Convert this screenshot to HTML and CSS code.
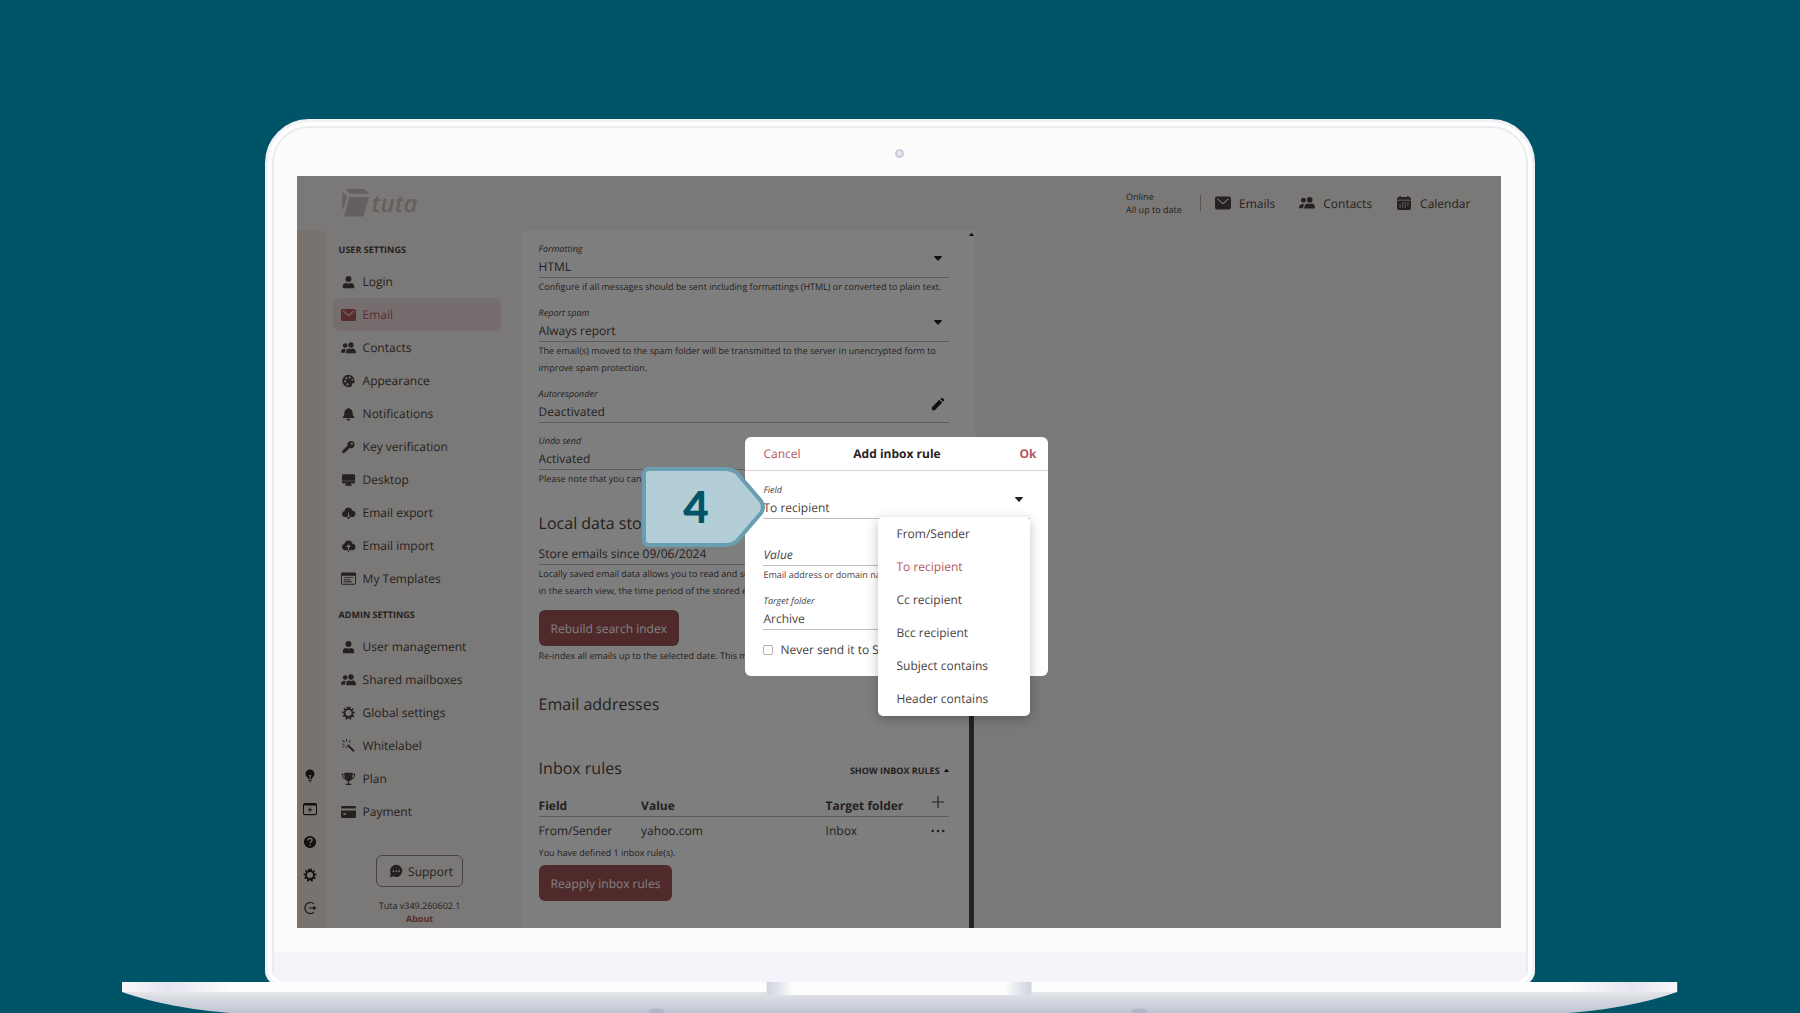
FILE: index.html
```html
<!DOCTYPE html>
<html lang="en">
<head>
    <meta charset="UTF-8">
    <title>Tuta - Add inbox rule</title>
    <link rel="stylesheet" href="styles.css">
</head>
<body>
<!-- icon sprite -->
<svg class="sprite" aria-hidden="true">
    <symbol id="i-user" viewBox="0 0 16 16"><circle cx="8" cy="4.6" r="3.4"/><path d="M1.5 14.4v-1.6c0-2.2 1.9-3.6 4-3.6 1.6.8 3.4.8 5 0 2.100 0 4 1.400 4 3.600v1.600q0 .6-.6.6H2.100q-.6 0-.6-.6z"/></symbol>
    <symbol id="i-users" viewBox="0 0 18 14"><circle cx="5" cy="4" r="2.800"/><circle cx="12" cy="3.400" r="3.200"/><path d="M0 12.300c0-2.800 1.400-4.300 4-4.300.8.5 1.800.5 2.600.1C5.200 9.300 4.700 10.700 4.700 12.800H.5q-.5 0-.5-.5zM6 12.700c0-3 1.300-4.900 4-5 1.300.6 2.700.6 4 0 2.700.1 4 2 4 5q0 .6-.6.6H6.600q-.6 0-.6-.6z"/></symbol>
    <symbol id="i-mail" viewBox="0 0 16 13"><path fill-rule="evenodd" d="M2 0h12a2 2 0 0 1 2 2v9a2 2 0 0 1-2 2H2a2 2 0 0 1-2-2V2a2 2 0 0 1 2-2zM2 2.600l5.200 4.700q.8.7 1.600 0L14 2.600l-.7-.8L8 6.500 2.700 1.800z"/></symbol>
    <symbol id="i-palette" viewBox="0 0 16 16"><path fill-rule="evenodd" d="M8 1a7 7 0 1 0 3.500 13c1.200-.8-.3-2.200.4-3 .9-1 3.100.6 3.100-2.500C15 4 12 1 8 1zM4.100 7.200a1.200 1.200 0 1 0 0 2.400 1.200 1.200 0 0 0 0-2.400zM5.700 3.500a1.200 1.200 0 1 0 0 2.400 1.200 1.200 0 0 0 0-2.400zM9.500 2.900a1.200 1.200 0 1 0 0 2.400 1.200 1.200 0 0 0 0-2.400zM12.400 5.600a1.100 1.100 0 1 0 0 2.200 1.100 1.100 0 0 0 0-2.200zM6.800 10.700a1.300 1.300 0 1 0 0 2.600 1.300 1.300 0 0 0 0-2.600z"/></symbol>
    <symbol id="i-bell" viewBox="0 0 16 16"><path d="M8 .8q1 0 1 1.200c2.500.5 3.700 2.300 3.700 4.900 0 2.400.7 3.500 2 4.700v1H1.300v-1c1.300-1.200 2-2.300 2-4.700C3.300 4.300 4.500 2.500 7 2q0-1.200 1-1.200zM5.900 13.400h4.200a2.100 2.100 0 0 1-4.200 0z"/></symbol>
    <symbol id="i-key" viewBox="0 0 16 16"><path fill-rule="evenodd" d="M10.800 1a4.200 4.200 0 0 0-4 5.500L1 12.300q-.5 2.200.7 2.700 1.200.3 2.300-.6l5.500-5.200A4.200 4.200 0 1 0 10.800 1zm1.100 2.100a1.200 1.200 0 1 1 0 2.400 1.200 1.200 0 0 1 0-2.400z"/></symbol>
    <symbol id="i-desktop" viewBox="0 0 16 16"><path d="M2 1.500h12a1.500 1.500 0 0 1 1.500 1.500v5.800H.5V3A1.500 1.500 0 0 1 2 1.500zM.5 9.400h15v1.100A1.500 1.500 0 0 1 14 12h-3.500l.5 1.400h1v1.100H4v-1.100h1L5.500 12H2a1.500 1.500 0 0 1-1.500-1.500z"/></symbol>
    <symbol id="i-export" viewBox="0 0 16 16"><path fill-rule="evenodd" d="M4 12.500a3.500 3.500 0 0 1-.7-6.900 4.700 4.700 0 0 1 9.200-.3 3.600 3.600 0 0 1-.5 7.200h-1.700L8 15l-2.300-2.500zM7.500 7.500V11H6l2 2.200L10 11H8.500V7.500z"/></symbol>
    <symbol id="i-import" viewBox="0 0 16 16"><path fill-rule="evenodd" d="M4 12.800a3.600 3.600 0 0 1-.7-7.100 4.700 4.700 0 0 1 9.200-.3 3.700 3.700 0 0 1-.5 7.400H8.600v-3.700H10.800L8 6 5.200 9.100H7.400V15h1.200v-2.200z"/></symbol>
    <symbol id="i-template" viewBox="0 0 16 14"><path fill-rule="evenodd" d="M1.500 0h13A1.500 1.500 0 0 1 16 1.500v10a1.500 1.500 0 0 1-1.500 1.500h-13A1.500 1.500 0 0 1 0 11.500v-10A1.500 1.500 0 0 1 1.500 0zM1 3.500v8q0 .5.5.5h13q.5 0 .5-.5v-8zM3 5h10v1H3zm0 2.200h7v1H3zm0 2.200h9v1H3z"/></symbol>
    <symbol id="i-gear" viewBox="0 0 16 16"><path fill-rule="evenodd" d="M6.200 2.700 5.300 1 7.100.6 8 2l.9-1.400 1.800.4-.9 1.700 1.500.9 1.400-1.300 1.100 1.400-1.300 1.300.7 1.500 1.900-.1.300 1.800-1.900.4-.3 1.600 1.500 1.200-.9 1.500-1.800-.7-1.200 1.100.6 1.800-1.700.6L8.800 14H7.200l-1.100 1.600-1.700-.7.7-1.700-1.200-1.100-1.800.6-.8-1.600 1.500-1.100-.3-1.600L.6 8l.3-1.800 1.900.1.700-1.500-1.300-1.300L3.300 2l1.500 1.500zM8 4.500a3.500 3.500 0 1 0 0 7 3.500 3.500 0 0 0 0-7z"/></symbol>
    <symbol id="i-wand" viewBox="0 0 16 16"><path d="m6.200 7.600 1.600-1.500 7.300 7.100-1.600 1.700zM5.200 0h1.100v3H5.200zM1 2l.8-.8 2.100 2-.8.8zM.3 5.400h3v1h-3zM1 9.300l2.100-2 .8.8-2.100 2zM8 3.300 10 1.200l.8.8-2 2.100zM5.200 8.500h1.100v2H5.200z"/></symbol>
    <symbol id="i-trophy" viewBox="0 0 16 16"><path fill-rule="evenodd" d="M3.400.8h9.200v1.300h3c.1 3.800-1.200 5.800-3.700 6.300-.7 1.300-1.700 2-3.200 2.300v2.600h2.500v1.500H4.800v-1.500h2.500v-2.600c-1.500-.3-2.500-1-3.200-2.300C1.600 7.900.3 5.900.4 2.100h3zM1.500 3.100c.1 2 .8 3.300 2.100 3.900-.2-1-.2-2.400-.2-3.900zm11.100 0c0 1.500 0 2.900-.2 3.900 1.300-.6 2-1.900 2.100-3.900z"/></symbol>
    <symbol id="i-card" viewBox="0 0 16 13"><path fill-rule="evenodd" d="M1.500 0h13A1.500 1.500 0 0 1 16 1.500v1.300H0V1.500A1.500 1.500 0 0 1 1.500 0zM0 5h16v6.500a1.500 1.500 0 0 1-1.500 1.500h-13A1.500 1.500 0 0 1 0 11.500zm2.500 2.800v1.700h3V7.800z"/></symbol>
    <symbol id="i-bulb" viewBox="0 0 16 16"><path fill-rule="evenodd" d="M8 .5a5 5 0 0 1 3.200 8.900c-.7.7-.9 1.200-1 2.100H8.600V8.200l1.200-1-.6-.7L8 7.500l-1.200-1-.6.7 1.200 1v3.300H5.800c-.1-.9-.3-1.400-1-2.100A5 5 0 0 1 8 .5zM6 12.300h4v1.200H6zm.8 1.900h2.400L8 15.700z"/></symbol>
    <symbol id="i-newwin" viewBox="0 0 16 14"><path fill-rule="evenodd" d="M2 0h12a2 2 0 0 1 2 2v10a2 2 0 0 1-2 2H2a2 2 0 0 1-2-2V2a2 2 0 0 1 2-2zM1.200 3v9q0 .8.8.8h12q.8 0 .8-.8V3zm6.200 2.300h1.200v1.900h1.900v1.200H8.600v1.900H7.400V8.400H5.500V7.200h1.900z"/></symbol>
    <symbol id="i-help" viewBox="0 0 16 16"><circle cx="8" cy="8" r="7"/><path class="cut" d="M5.600 6.300C5.700 4.700 6.600 4 8 4s2.400.8 2.400 2c0 1.700-2.200 1.700-2.200 3.500M8.200 11v1.500"/></symbol>
    <symbol id="i-logout" viewBox="0 0 16 16"><path class="line" d="M12.600 3.300a6.300 6.300 0 1 0 0 9.400M6.500 8h7"/><path d="M12 5.300 15.300 8 12 10.700z"/></symbol>
    <symbol id="i-chat" viewBox="0 0 16 16"><path fill-rule="evenodd" d="M8.300 1a6.900 6.900 0 1 1-3.200 13L1 15l.9-4.200A6.900 6.900 0 0 1 8.300 1zM5 7a1 1 0 1 0 0 2 1 1 0 0 0 0-2zm3.300 0a1 1 0 1 0 0 2 1 1 0 0 0 0-2zm3.300 0a1 1 0 1 0 0 2 1 1 0 0 0 0-2z"/></symbol>
    <symbol id="i-calendar" viewBox="0 0 15 14"><path fill-rule="evenodd" d="M3 0h1.300v1h6.400V0H12v1h.5a2 2 0 0 1 2 2v.8H.5V3a2 2 0 0 1 2-2H3zM.5 4.600h14V12a2 2 0 0 1-2 2h-10a2 2 0 0 1-2-2zM5.600 6.600v.9h1.300v-.9zm2.600 0v.9h1.300v-.9zm2.600 0v.9h1.300v-.9zM3 8.600v.9h1.300v-.9zm2.600 0v.9h1.300v-.9zm2.600 0v.9h1.300v-.9zm2.600 0v.9h1.300v-.9zM3 10.600v.9h1.300v-.9zm2.600 0v.9h1.300v-.9zm2.600 0v.9h1.300v-.9z"/></symbol>
    <symbol id="i-pencil" viewBox="0 0 16 16"><path d="M1 11.700 9.500 3.200l3.300 3.300L4.300 15H1zM10.500 2.200l.9-.9q1-1 2 0l1.300 1.300q1 1 0 2l-.9.900z"/></symbol>
    <symbol id="i-plus" viewBox="0 0 16 16"><path class="line" d="M8 1v14M1 8h14"/></symbol>
    <symbol id="i-dots" viewBox="0 0 16 16"><circle cx="2" cy="8" r="1.500"/><circle cx="8" cy="8" r="1.500"/><circle cx="14" cy="8" r="1.500"/></symbol>
    <symbol id="i-down" viewBox="0 0 10 6"><path d="M.4 0h9.200q.6.300.2.800L5.700 5.600q-.7.6-1.400 0L.2.800Q-.2.300.4 0z"/></symbol>
    <symbol id="i-up" viewBox="0 0 10 6"><path d="M.4 6h9.200q.6-.3.200-.8L5.700.4Q5-.2 4.300.4L.2 5.200q-.4.5.2.8z"/></symbol>
</svg>

<div class="laptop">
    <div class="lid">
        <div class="camera"></div>
        <div class="screen">
            <header class="topbar">
                <div class="logo">
                    <svg viewBox="0 0 28 28" aria-hidden="true"><path d="M3.700 0h18.600L27 4.700H7.500zM.3 3l5 4.500-5 14.500zM7.400 8H27l-5.300 19.500H2z"/></svg>
                    <span>tuta</span>
                </div>
                <div class="status">Online<br>All up to date</div>
                <nav class="mainnav">
                    <a href="#"><svg class="icon"><use href="#i-mail"/></svg>Emails</a>
                    <a href="#"><svg class="icon"><use href="#i-users"/></svg>Contacts</a>
                    <a href="#"><svg class="icon"><use href="#i-calendar"/></svg>Calendar</a>
                </nav>
            </header>

            <div class="columns">
                <div class="rail">
                    <button aria-label="News"><svg class="icon"><use href="#i-bulb"/></svg></button>
                    <button aria-label="New window"><svg class="icon"><use href="#i-newwin"/></svg></button>
                    <button aria-label="Help"><svg class="icon"><use href="#i-help"/></svg></button>
                    <button aria-label="Settings"><svg class="icon"><use href="#i-gear"/></svg></button>
                    <button aria-label="Logout"><svg class="icon"><use href="#i-logout"/></svg></button>
                </div>

                <div class="sidebar">
                    <nav>
                        <h2>USER SETTINGS</h2>
                        <a href="#"><svg class="icon"><use href="#i-user"/></svg>Login</a>
                        <a href="#" class="active"><svg class="icon"><use href="#i-mail"/></svg>Email</a>
                        <a href="#"><svg class="icon"><use href="#i-users"/></svg>Contacts</a>
                        <a href="#"><svg class="icon"><use href="#i-palette"/></svg>Appearance</a>
                        <a href="#"><svg class="icon"><use href="#i-bell"/></svg>Notifications</a>
                        <a href="#"><svg class="icon"><use href="#i-key"/></svg>Key verification</a>
                        <a href="#"><svg class="icon"><use href="#i-desktop"/></svg>Desktop</a>
                        <a href="#"><svg class="icon"><use href="#i-export"/></svg>Email export</a>
                        <a href="#"><svg class="icon"><use href="#i-import"/></svg>Email import</a>
                        <a href="#"><svg class="icon"><use href="#i-template"/></svg>My Templates</a>
                        <h2>ADMIN SETTINGS</h2>
                        <a href="#"><svg class="icon"><use href="#i-user"/></svg>User management</a>
                        <a href="#"><svg class="icon"><use href="#i-users"/></svg>Shared mailboxes</a>
                        <a href="#"><svg class="icon"><use href="#i-gear"/></svg>Global settings</a>
                        <a href="#"><svg class="icon"><use href="#i-wand"/></svg>Whitelabel</a>
                        <a href="#"><svg class="icon"><use href="#i-trophy"/></svg>Plan</a>
                        <a href="#"><svg class="icon"><use href="#i-card"/></svg>Payment</a>
                    </nav>
                    <div class="sidebar-footer">
                        <button class="support"><svg class="icon"><use href="#i-chat"/></svg>Support</button>
                        <div>Tuta v349.260602.1</div>
                        <a href="#">About</a>
                    </div>
                </div>

                <main class="panel">
                    <div class="field">
                        <label for="formatting">Formatting</label>
                        <div class="control">
                            <select id="formatting"><option>HTML</option></select>
                            <svg class="caret"><use href="#i-down"/></svg>
                        </div>
                        <p class="help">Configure if all messages should be sent including formattings (HTML) or converted to plain text.</p>
                    </div>
                    <div class="field">
                        <label for="spam">Report spam</label>
                        <div class="control">
                            <select id="spam"><option>Always report</option></select>
                            <svg class="caret"><use href="#i-down"/></svg>
                        </div>
                        <p class="help">The email(s) moved to the spam folder will be transmitted to the server in unencrypted form to<br>improve spam protection.</p>
                    </div>
                    <div class="field">
                        <label for="autoresponder">Autoresponder</label>
                        <div class="control">
                            <input type="text" id="autoresponder" value="Deactivated" readonly>
                            <button class="edit" aria-label="Edit"><svg class="icon"><use href="#i-pencil"/></svg></button>
                        </div>
                    </div>
                    <div class="field">
                        <label for="undo">Undo send</label>
                        <div class="control">
                            <select id="undo"><option>Activated</option></select>
                            <svg class="caret"><use href="#i-down"/></svg>
                        </div>
                        <p class="help">Please note that you can undo sending an email within 15 seconds.</p>
                    </div>

                    <h3 class="first">Local data storage</h3>
                    <div class="control">
                        <input type="text" value="Store emails since 09/06/2024" aria-label="Store emails since" readonly>
                    </div>
                    <p class="help">Locally saved email data allows you to read and search your emails offline. When searching<br>in the search view, the time period of the stored emails is extended automatically.</p>
                    <button class="primary">Rebuild search index</button>
                    <p class="help">Re-index all emails up to the selected date. This may take some time.</p>

                    <h3>Email addresses</h3>

                    <div class="section-head">
                        <h3>Inbox rules</h3>
                        <button>SHOW INBOX RULES <svg class="tiny"><use href="#i-up"/></svg></button>
                    </div>
                    <table>
                        <thead>
                            <tr>
                                <th>Field</th>
                                <th>Value</th>
                                <th>Target folder</th>
                                <th><button aria-label="Add inbox rule"><svg class="icon"><use href="#i-plus"/></svg></button></th>
                            </tr>
                        </thead>
                        <tbody>
                            <tr>
                                <td>From/Sender</td>
                                <td>yahoo.com</td>
                                <td>Inbox</td>
                                <td><button aria-label="More"><svg class="icon"><use href="#i-dots"/></svg></button></td>
                            </tr>
                        </tbody>
                    </table>
                    <p class="help">You have defined 1 inbox rule(s).</p>
                    <button class="primary reapply">Reapply inbox rules</button>

                    <div class="scrollbar"><svg class="tiny"><use href="#i-up"/></svg><span></span></div>
                </main>
            </div>

            <div class="overlay">
                <div class="dialog" role="dialog" aria-labelledby="dialog-title">
                    <div class="dialog-head">
                        <button class="cancel">Cancel</button>
                        <h2 id="dialog-title">Add inbox rule</h2>
                        <button class="ok">Ok</button>
                    </div>
                    <div class="dialog-body">
                        <div class="field">
                            <label for="rule-field">Field</label>
                            <div class="control">
                                <select id="rule-field"><option>To recipient</option></select>
                                <svg class="caret"><use href="#i-down"/></svg>
                            </div>
                        </div>
                        <div class="field value-field">
                            <div class="control">
                                <input type="text" placeholder="Value" aria-label="Value">
                            </div>
                            <p class="help">Email address or domain name</p>
                        </div>
                        <div class="field">
                            <label for="folder">Target folder</label>
                            <div class="control">
                                <select id="folder"><option>Archive</option></select>
                            </div>
                        </div>
                        <label class="check"><input type="checkbox">Never send it to Spam</label>
                    </div>
                    <div class="menu" role="listbox">
                        <button role="option">From/Sender</button>
                        <button role="option" class="selected" aria-selected="true">To recipient</button>
                        <button role="option">Cc recipient</button>
                        <button role="option">Bcc recipient</button>
                        <button role="option">Subject contains</button>
                        <button role="option">Header contains</button>
                    </div>
                    <div class="callout">
                        <svg viewBox="0 0 123 80" aria-hidden="true"><path d="M7 2h76q7 0 12 4l24 28q4 6 0 12L95 74q-5 4-12 4H7q-5 0-5-5V7q0-5 5-5z"/></svg>
                        <span>4</span>
                    </div>
                </div>
            </div>
        </div>
        <div class="chin"></div>
    </div>
    <svg class="base" viewBox="0 0 1556 32" preserveAspectRatio="none" aria-hidden="true">
        <defs>
            <linearGradient id="body" x1="0" y1="0" x2="0" y2="1"><stop offset="0" stop-color="#e4e5e8"/><stop offset="1" stop-color="#bdc2d2"/></linearGradient>
            <linearGradient id="strip"><stop offset="0" stop-color="#f8f8fb"/><stop offset=".03" stop-color="#e4e5ee"/><stop offset=".07" stop-color="#fdfdfd"/><stop offset=".93" stop-color="#fdfdfd"/><stop offset=".97" stop-color="#e4e5ee"/><stop offset="1" stop-color="#f8f8fb"/></linearGradient>
            <linearGradient id="notch"><stop offset="0" stop-color="#d0d4de"/><stop offset=".04" stop-color="#dfe2ea"/><stop offset=".1" stop-color="#fdfdfd"/><stop offset=".9" stop-color="#fdfdfd"/><stop offset=".96" stop-color="#dfe2ea"/><stop offset="1" stop-color="#d0d4de"/></linearGradient>
        </defs>
        <path fill="url(#body)" d="M0 10h1556q-48 17-120 22H120Q48 27 0 10z"/>
        <path fill="url(#strip)" d="M0 0h1556v10H0z"/>
        <path fill="url(#notch)" d="M645 0h265v10q0 3-6 3H651q-6 0-6-3z"/>
        <ellipse cx="535" cy="29" rx="8" ry="2.500" fill="#b0b5c9"/>
        <ellipse cx="1018" cy="29" rx="8" ry="2.500" fill="#b0b5c9"/>
    </svg>
</div>
</body>
</html>
```
FILE: styles.css
```css
* {
    box-sizing: border-box;
}

body {
    margin: 0;
    min-height: 100vh;
    background-color: #005468;
    color: #4a4240;
    font-family: "Open Sans", "Noto Sans", sans-serif;
    font-size: 12px;
    text-rendering: geometricPrecision;
    overflow: hidden;
}

h2, h3, p {
    margin: 0;
}

a {
    color: inherit;
    text-decoration: none;
}

button, input, select {
    font: inherit;
    color: inherit;
    background: none;
    border: none;
    padding: 0;
    margin: 0;
    text-rendering: inherit;
}

button {
    cursor: pointer;
}

.sprite {
    display: none;
}

.icon {
    width: 14px;
    height: 14px;
    fill: currentColor;
    flex: none;
}

.line {
    fill: none;
    stroke: currentColor;
    stroke-width: 1.3;
}

.cut {
    fill: none;
    stroke: #f0e6e0;
    stroke-width: 1.5;
}

.caret {
    width: 8px;
    height: 5px;
    fill: #28211f;
}

.tiny {
    width: 5px;
    height: 3px;
    fill: #28211f;
}

/* laptop frame */
.laptop {
    display: flex;
    flex-direction: column;
    align-items: center;
    padding-top: 119px;
}

.lid {
    width: 70.6%;
    background-color: #fcfcfc;
    border: 3px solid #f1f1f6;
    border-radius: 44px 44px 14px 14px;
    box-shadow: inset 0 0 0 4px #fff, inset 0 0 0 6px #ececf0;
    overflow: hidden;
}

.camera {
    width: 9px;
    height: 9px;
    margin: 27px auto 18px;
    border: 2px solid #c9cbd8;
    border-radius: 50%;
    background-color: #e6e8f2;
}

.screen {
    position: relative;
    margin: 0 31px 0 29px;
    background-color: #f7f3ef;
}

.chin {
    height: 30px;
    margin: 24px 6px 0;
    background-color: #f4f4fa;
    border-radius: 0 0 10px 10px;
}

.base {
    width: 86.4%;
    height: 32px;
    margin-top: -3px;
    position: relative;
}

/* header */
.topbar {
    display: flex;
    align-items: center;
    height: 54px;
    padding: 0 31px 0 45px;
}

.logo {
    display: flex;
    align-items: center;
    gap: 2px;
    flex: 1;
    color: #cbbfbf;
    font-size: 24px;
    font-style: italic;
    font-weight: 600;
}

.logo svg {
    width: 28px;
    height: 28px;
    fill: currentColor;
}

.status {
    font-size: 9px;
    line-height: 13px;
    width: 74px;
}

.mainnav {
    display: flex;
    gap: 24px;
    align-items: center;
    height: 16px;
    padding-left: 14px;
    border-left: 1px solid #b5a8a6;
}

.mainnav a {
    display: flex;
    align-items: center;
    gap: 8px;
}

.mainnav .icon {
    width: 16px;
}

/* columns */
.columns {
    display: grid;
    grid-template-columns: 30px 194px minmax(0, 454px) 1fr;
}

.rail {
    display: flex;
    flex-direction: column;
    justify-content: flex-end;
    padding: 0 3px 4px 0;
    background-color: #f2e7e1;
    border-top-right-radius: 7px;
    color: #28211f;
}

.rail button {
    display: grid;
    place-items: center;
    height: 33px;
}

.sidebar {
    display: flex;
    flex-direction: column;
    justify-content: space-between;
    padding-right: 8px;
}

.sidebar nav {
    margin: 0 12px 0 6px;
}

.sidebar h2 {
    height: 35px;
    padding: 5px 0 0 6px;
    font-size: 9px;
    line-height: 30px;
}

.sidebar nav a {
    display: flex;
    align-items: center;
    gap: 7px;
    height: 33px;
    padding-left: 8px;
    border-radius: 6px;
}

.sidebar nav .icon {
    width: 15px;
}

.sidebar nav a.active {
    background-color: #ecdcdc;
    color: #b0585c;
}

.sidebar-footer {
    display: flex;
    flex-direction: column;
    align-items: center;
    padding-bottom: 3px;
    font-size: 9px;
    line-height: 13px;
}

.sidebar-footer a {
    color: #b0585c;
    font-weight: bold;
}

.support {
    display: flex;
    align-items: center;
    gap: 5px;
    height: 32px;
    margin-bottom: 12px;
    padding: 0 9px 0 12px;
    border: 1px solid #8c8482;
    border-radius: 6px;
    font-size: 12px;
}

/* settings panel */
.panel {
    position: relative;
    padding: 12px 26px 27px 18px;
    background-color: #fdfdfd;
    border-top-left-radius: 7px;
}

.field {
    margin-bottom: 11px;
}

.field > label {
    display: block;
    font-size: 9px;
    font-style: italic;
    line-height: 14px;
}

.control {
    position: relative;
    display: flex;
    align-items: center;
    height: 22px;
    border-bottom: 1px solid #c5b9b9;
}

.control input, .control select {
    flex: 1;
    min-width: 0;
    appearance: none;
    outline: none;
}

.control .caret, .edit {
    position: absolute;
    right: 7px;
    top: 0;
}

.edit {
    right: 4px;
    top: -4px;
    color: #28211f;
}

.help {
    font-size: 9px;
    line-height: 17px;
    white-space: nowrap;
    overflow: hidden;
}

h3 {
    margin: 28px 0 0;
    font-size: 16px;
    font-weight: normal;
    line-height: 24px;
}

h3.first {
    margin: 24px 0 8px;
}

.primary {
    display: block;
    height: 36px;
    margin: 11px 0 1px;
    padding: 0 12px;
    border-radius: 6px;
    background-color: #a05455;
    color: #fff;
}

.reapply {
    margin: 4px 0 0;
}

.section-head {
    display: flex;
    align-items: center;
    justify-content: space-between;
    margin: 40px 0 15px;
}

.section-head h3 {
    margin: 0;
}

.section-head button {
    display: flex;
    align-items: center;
    gap: 4px;
    padding-top: 5px;
    font-size: 9px;
    font-weight: bold;
}

table {
    width: 100%;
    border-collapse: collapse;
    text-align: left;
}

th, td {
    height: 21px;
    padding: 0;
}

td {
    height: 28px;
    padding-top: 1px;
}

th {
    border-bottom: 1px solid #c5b9b9;
}

th:nth-child(1) {
    width: 25%;
}

th:nth-child(2) {
    width: 45%;
}

th:nth-child(4), td:nth-child(4) {
    padding-right: 4px;
}

th:nth-child(4) {
    vertical-align: top;
}

table button {
    display: block;
    margin-left: auto;
}

table svg {
    display: block;
}

.scrollbar {
    position: absolute;
    top: 3px;
    right: 1px;
    bottom: 0;
    width: 5px;
    display: flex;
    flex-direction: column;
    align-items: center;
}

.scrollbar span {
    flex: 1;
    width: 5px;
    margin-top: 300px;
    background-color: #4a4240;
}

/* dialog */
.overlay {
    position: absolute;
    inset: 0;
    display: grid;
    place-items: center;
    padding: 9px 4px 0 0;
    background-color: rgba(0, 0, 0, 0.5);
}

.dialog {
    position: relative;
    width: 303px;
    background-color: #fff;
    border-radius: 6px;
}

.dialog-head {
    display: grid;
    grid-template-columns: 1fr auto 1fr;
    align-items: center;
    height: 34px;
    padding: 0 12px;
    border-bottom: 1px solid #dccfd0;
    color: #b0585c;
}

.dialog-head h2 {
    font-size: 12px;
    color: #28211f;
}

.dialog-head .cancel {
    justify-self: start;
    margin-left: 6px;
}

.dialog-head .ok {
    justify-self: end;
    font-weight: bold;
}

.dialog-body {
    padding: 12px 18px 18px;
}

.value-field {
    margin-top: 25px;
}

.value-field input::placeholder {
    color: inherit;
    font-style: italic;
    opacity: 1;
}

.check {
    display: flex;
    align-items: center;
    gap: 7px;
}

.check input {
    width: 10px;
    height: 10px;
    appearance: none;
    border: 1px solid #b9aeae;
    border-radius: 2px;
}

.menu {
    position: absolute;
    top: 80px;
    right: 18px;
    width: 152px;
    display: flex;
    flex-direction: column;
    padding-bottom: 1px;
    background-color: #fff;
    border-radius: 5px;
    box-shadow: 0 3px 12px rgba(0, 0, 0, 0.25);
}

.menu button {
    height: 33px;
    padding-left: 18px;
    text-align: left;
}

.menu .selected {
    color: #b0585c;
}

.callout {
    position: absolute;
    left: -103px;
    top: 30px;
    width: 123px;
    height: 80px;
}

.callout svg {
    display: block;
    fill: #b3ced6;
    stroke: #699fb1;
    stroke-width: 4;
}

.callout span {
    position: absolute;
    inset: 0 16px 0 0;
    display: grid;
    place-items: center;
    color: #005468;
    font-family: Lato, sans-serif;
    font-size: 44px;
    font-weight: 900;
}
```
